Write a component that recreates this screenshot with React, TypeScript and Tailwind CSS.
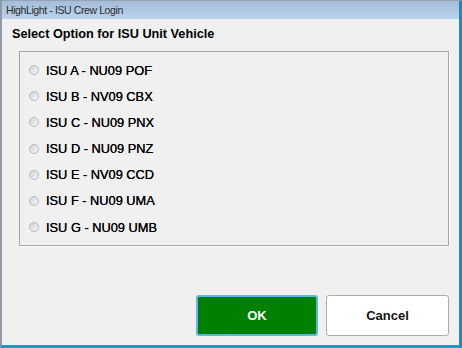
import React from 'react'

const options = [
  'ISU A - NU09 POF',
  'ISU B - NV09 CBX',
  'ISU C - NU09 PNX',
  'ISU D - NU09 PNZ',
  'ISU E - NV09 CCD',
  'ISU F - NU09 UMA',
  'ISU G - NU09 UMB',
]

function Radio() {
  return (
    <span className="w-[10px] h-[10px] rounded-full border border-[#b9b9b9] bg-gradient-to-br from-[#d4d4d4] to-[#f6f6f6] shrink-0" />
  )
}

export default function App() {
  return (
    <div className="w-[462px] h-[348px] bg-[#f0f0f0] flex flex-col border-t border-t-[#9aa3ad] border-l-2 border-l-[#8f9aa6] border-r-[3px] border-r-[#1a8db6] border-b-[3px] border-b-[#1b9cc4] font-['Liberation_Sans',Arial,sans-serif] text-[#111]">
      <div className="h-[18px] shrink-0 bg-gradient-to-b from-[#a3bddb] to-[#bbd3ec] flex items-center pl-[4px] pt-[1px] text-[10.5px] tracking-[-0.4px] text-[#2a2a2a]">
        HighLight - ISU Crew Login
      </div>
      <div className="pl-[10px] pt-[8px] text-[12.7px] font-bold leading-[15px] text-black">
        Select Option for ISU Unit Vehicle
      </div>
      <div className="ml-[17px] mt-[9px] w-[430px] h-[195px] border border-[#a5a5a5] shadow-[1px_1px_0_#fff] flex flex-col pt-[5px]">
        {options.map((o) => (
          <label key={o} className="h-[26.2px] flex items-center pl-[9px] gap-[7px] text-[12.8px] text-black [text-shadow:0_0_0.4px_#000]">
            <Radio />
            <span>{o}</span>
          </label>
        ))}
      </div>
      <div className="flex gap-[8px] ml-[194px] mt-[49px]">
        <button className="w-[122px] h-[41px] rounded-[3px] border-2 border-[#62b3e8] bg-[#008000] text-white text-[13px] font-bold">
          OK
        </button>
        <button className="w-[123px] h-[41px] rounded-[3px] border border-[#adadad] bg-white text-[#111] text-[13px] font-bold">
          Cancel
        </button>
      </div>
    </div>
  )
}
